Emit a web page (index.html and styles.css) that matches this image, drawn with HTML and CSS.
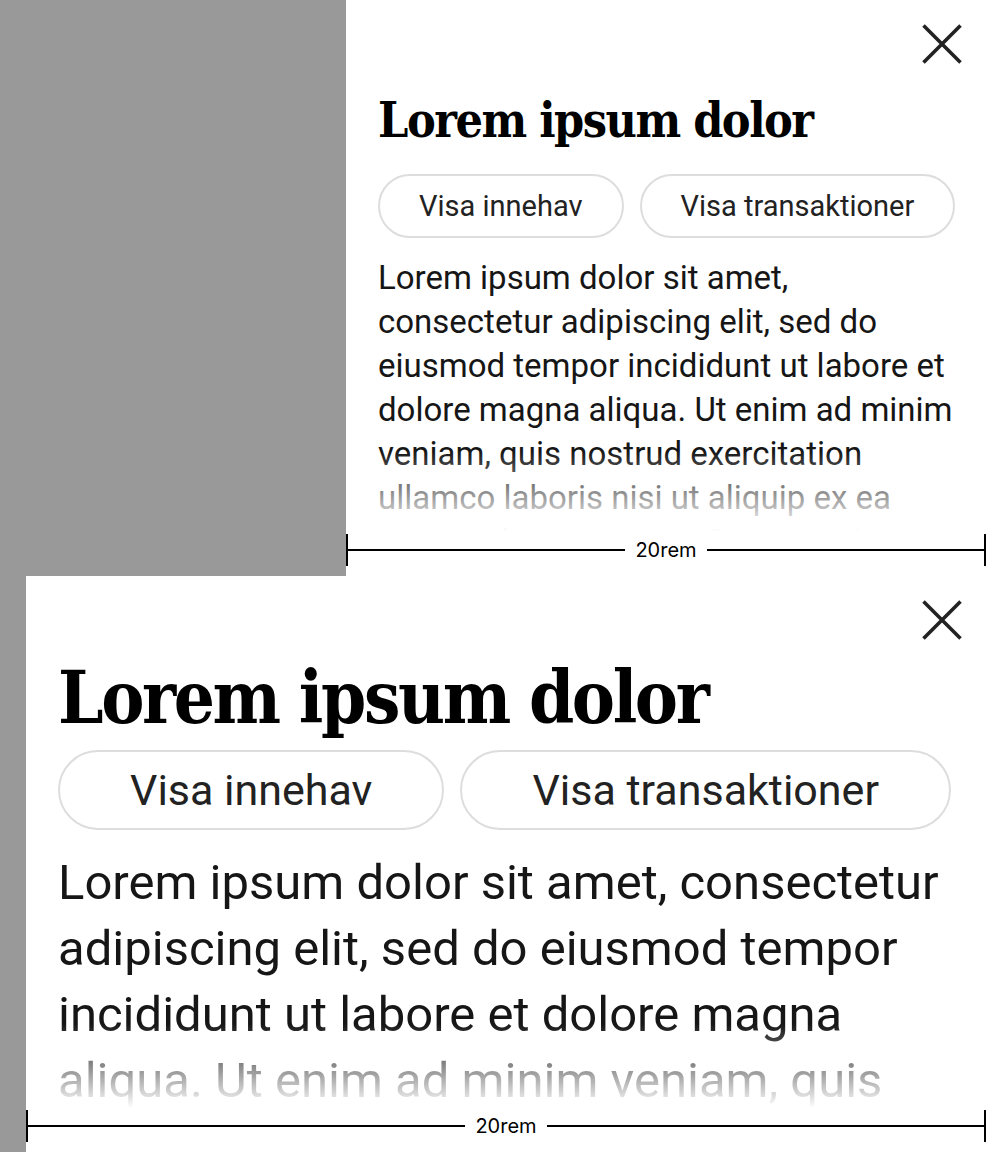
FILE: index.html
```html
<!DOCTYPE html>
<html lang="sv">
<head>
<meta charset="utf-8">
<title>Drawer</title>
<link rel="stylesheet" href="styles.css">
</head>
<body>
  <section class="frame frame--small">
    <aside class="drawer">
      <div class="drawer-head">
        <button class="close" aria-label="Stäng">
          <svg viewBox="0 0 40 40" width="40" height="40"><path d="M1.5 1.5 L38.5 38.5 M38.5 1.5 L1.5 38.5" stroke="#222" stroke-width="3.6" fill="none"/></svg>
        </button>
      </div>
      <h2 class="title">Lorem ipsum dolor</h2>
      <div class="actions">
        <button class="pill">Visa innehav</button>
        <button class="pill">Visa transaktioner</button>
      </div>
      <div class="body">
        <p>Lorem ipsum dolor sit amet, consectetur adipiscing elit, sed do eiusmod tempor incididunt ut labore et dolore magna aliqua. Ut enim ad minim veniam, quis nostrud exercitation ullamco laboris nisi ut aliquip ex ea commodo consequat. Duis aute irure dolor in reprehenderit in voluptate velit esse cillum dolore eu fugiat nulla pariatur.</p>
      </div>
      <div class="measure">
        <span class="tick"></span><span class="rule"></span><span class="label">20rem</span><span class="rule"></span><span class="tick"></span>
      </div>
    </aside>
  </section>
  <section class="frame frame--large">
    <aside class="drawer">
      <div class="drawer-head">
        <button class="close" aria-label="Stäng">
          <svg viewBox="0 0 40 40" width="40" height="40"><path d="M1.5 1.5 L38.5 38.5 M38.5 1.5 L1.5 38.5" stroke="#222" stroke-width="3.6" fill="none"/></svg>
        </button>
      </div>
      <h2 class="title">Lorem ipsum dolor</h2>
      <div class="actions">
        <button class="pill">Visa innehav</button>
        <button class="pill">Visa transaktioner</button>
      </div>
      <div class="body">
        <p>Lorem ipsum dolor sit amet, consectetur adipiscing elit, sed do eiusmod tempor incididunt ut labore et dolore magna aliqua. Ut enim ad minim veniam, quis nostrud exercitation ullamco laboris nisi ut aliquip ex ea commodo consequat. Duis aute irure dolor in reprehenderit in voluptate velit esse cillum dolore eu fugiat nulla pariatur.</p>
      </div>
      <div class="measure">
        <span class="tick"></span><span class="rule"></span><span class="label">20rem</span><span class="rule"></span><span class="tick"></span>
      </div>
    </aside>
  </section>
</body>
</html>
```
FILE: styles.css
```css
* { box-sizing: border-box; }
html, body { margin: 0; padding: 0; }
body { background: #999; font-family: Roboto, "Noto Sans", sans-serif; }

.frame {
  height: 576px;
  background: #999;
  display: flex;
  justify-content: flex-end;
  overflow: hidden;
}
.drawer {
  position: relative;
  background: #fff;
  height: 100%;
  padding: 24px 32px 0 32px;
  display: flex;
  flex-direction: column;
}
.frame--small .drawer { width: 640px; }
.frame--large .drawer { width: 960px; }

.drawer-head {
  display: flex;
  justify-content: flex-end;
  margin-right: -8px;
}
.close {
  width: 40px;
  height: 40px;
  padding: 0;
  border: 0;
  background: none;
  display: block;
}
.close svg { display: block; }

.title {
  margin: 0;
  font-family: "DejaVu Serif Condensed", "DejaVu Serif", serif;
  font-stretch: condensed;
  font-weight: 700;
  color: #000;
}
.frame--small .title { font-size: 48px; line-height: 56px; margin-top: 28px; letter-spacing: -1.5px; }
.frame--large .title { font-size: 72px; line-height: 84px; margin-top: 16px; letter-spacing: -2.4px; }

.actions {
  display: flex;
  gap: 16px;
}
.frame--small .actions { margin-top: 26px; }
.frame--large .actions { margin-top: 10px; }

.pill {
  font-family: Roboto, sans-serif;
  color: #222;
  background: #fff;
  border: 2px solid #ddd;
  border-radius: 999px;
  white-space: nowrap;
}
.frame--small .pill { font-size: 29px; line-height: 34px; padding: 13px 39px; }
.frame--large .pill { font-size: 43px; line-height: 50px; padding: 13px 70px; }

.body {
  position: relative;
  overflow: hidden;
  color: #161616;
}
.body p { margin: 0; }
.body::after {
  content: "";
  position: absolute;
  left: 0;
  right: 0;
  bottom: 0;
  background: linear-gradient(rgba(255,255,255,0), #fff);
}
.frame--small .body { font-size: 33px; line-height: 44px; margin-top: 18px; height: 275px; }
.frame--small .body::after { height: 80px; }
.frame--large .body { font-size: 49px; line-height: 66px; margin-top: 20px; height: 258px; }
.frame--large .body::after { height: 84px; }

.measure {
  position: absolute;
  left: 0;
  right: 0;
  bottom: 10px;
  height: 32px;
  display: flex;
  align-items: center;
}
.tick { width: 2px; height: 32px; background: #000; }
.rule { flex: 1; height: 2px; background: #000; }
.label {
  font-family: Inter, Roboto, sans-serif;
  font-size: 20px;
  line-height: 24px;
  color: #000;
  padding: 0 10px;
}
```
